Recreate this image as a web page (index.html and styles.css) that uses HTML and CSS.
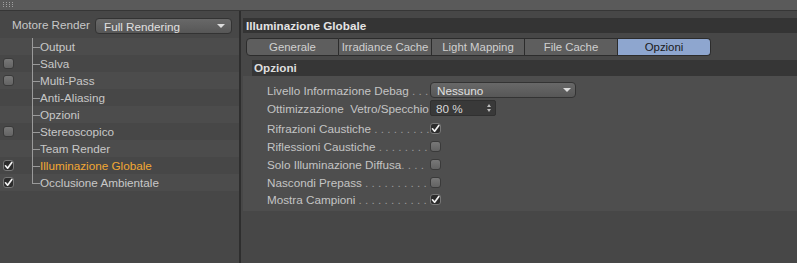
FILE: index.html
```html
<!DOCTYPE html>
<html lang="it">
<head>
    <meta charset="UTF-8">
    <meta name="viewport" content="width=device-width, initial-scale=1.0">
    <title>Impostazioni Render</title>
    <link rel="stylesheet" href="styles.css">
</head>
<body>
    <div class="topbar"><span class="grip"></span></div>

    <div class="main">
        <!-- Left: render settings tree -->
        <div class="side">
            <div class="render-row">
                <span class="render-label">Motore Render</span>
                <div class="select render-select">Full Rendering<span class="arrow"></span></div>
            </div>
            <ul class="tree">
                <li class="row odd"><span class="box none"></span><span class="twig"></span>Output</li>
                <li class="row"><span class="box"></span><span class="twig"></span>Salva</li>
                <li class="row odd"><span class="box"></span><span class="twig"></span>Multi-Pass</li>
                <li class="row"><span class="box none"></span><span class="twig"></span>Anti-Aliasing</li>
                <li class="row odd"><span class="box none"></span><span class="twig"></span>Opzioni</li>
                <li class="row"><span class="box"></span><span class="twig"></span>Stereoscopico</li>
                <li class="row odd"><span class="box none"></span><span class="twig"></span>Team Render</li>
                <li class="row active"><span class="box checked"><svg viewBox="0 0 11 11"><path d="M2.5 5.8 L4.6 8.2 L8.8 2.4"/></svg></span><span class="twig"></span>Illuminazione Globale</li>
                <li class="row odd"><span class="box checked"><svg viewBox="0 0 11 11"><path d="M2.5 5.8 L4.6 8.2 L8.8 2.4"/></svg></span><span class="twig last"></span>Occlusione Ambientale</li>
            </ul>
        </div>

        <div class="divider"></div>

        <!-- Right: Illuminazione Globale settings -->
        <div class="content">
            <div class="panel-title">Illuminazione Globale</div>
            <div class="tabs">
                <div class="tab first">Generale</div>
                <div class="tab">Irradiance Cache</div>
                <div class="tab">Light Mapping</div>
                <div class="tab">File Cache</div>
                <div class="tab selected">Opzioni</div>
            </div>
            <div class="group-title">Opzioni</div>
            <div class="group">
                <div class="field tall">
                    <span class="label">Livello Informazione Debag<span class="dots"> . . .</span></span>
                    <div class="select debug-select">Nessuno<span class="arrow"></span></div>
                </div>
                <div class="field tall">
                    <span class="label">Ottimizzazione&nbsp; Vetro/Specchio</span>
                    <div class="number">80 %<span class="spin"></span></div>
                </div>
                <div class="field first-check">
                    <span class="label">Rifrazioni Caustiche <span class="dots">. . . . . . . . .</span></span>
                    <span class="box checked"><svg viewBox="0 0 11 11"><path d="M2.5 5.8 L4.6 8.2 L8.8 2.4"/></svg></span>
                </div>
                <div class="field">
                    <span class="label">Riflessioni Caustiche <span class="dots">. . . . . . . .</span></span>
                    <span class="box"></span>
                </div>
                <div class="field">
                    <span class="label">Solo Illuminazione Diffusa<span class="dots">. . . .</span></span>
                    <span class="box"></span>
                </div>
                <div class="field">
                    <span class="label">Nascondi Prepass <span class="dots">. . . . . . . . . . .</span></span>
                    <span class="box"></span>
                </div>
                <div class="field">
                    <span class="label">Mostra Campioni <span class="dots">. . . . . . . . . . .</span></span>
                    <span class="box checked"><svg viewBox="0 0 11 11"><path d="M2.5 5.8 L4.6 8.2 L8.8 2.4"/></svg></span>
                </div>
            </div>
        </div>
    </div>
</body>
</html>
```

FILE: styles.css
```css
body {
    margin: 0;
    width: 797px;
    height: 263px;
    overflow: hidden;
    background: #474747;
    color: #c4c4c4;
    font-family: "Liberation Sans", Arial, sans-serif;
    font-size: 11.7px;
}
.topbar {
    height: 10px;
    background: #5a5a5a;
    border-bottom: 1px solid #363636;
    position: relative;
}
.grip {
    position: absolute;
    left: 3px;
    top: 2px;
    width: 12px;
    height: 6px;
    background:
        linear-gradient(90deg, #a0a0a0 1px, transparent 1px) 0 0 / 3px 2px,
        #5a5a5a;
    -webkit-mask: linear-gradient(#000 1px, transparent 1px) 0 0 / 3px 2px;
    mask: linear-gradient(#000 1px, transparent 1px) 0 0 / 3px 2px;
}
.main {
    display: flex;
    height: 252px;
}
.side {
    width: 239px;
}
.divider {
    width: 2px;
    background: #2e2e2e;
}
.content {
    flex: 1;
}

/* left panel */
.render-row {
    display: flex;
    align-items: center;
    height: 27px;
    padding-left: 12px;
}
.render-label {
    width: 83px;
    color: #c8c8c8;
}
.select {
    position: relative;
    height: 16px;
    line-height: 15px;
    box-sizing: border-box;
    padding-left: 8px;
    border: 1px solid #333;
    border-radius: 4px;
    background: linear-gradient(#686868, #575757);
    color: #e0e0e0;
}
.render-select {
    width: 137px;
    margin-top: 2px;
}
.arrow {
    position: absolute;
    right: 6px;
    top: 5px;
    border-left: 4px solid transparent;
    border-right: 4px solid transparent;
    border-top: 4px solid #dcdcdc;
}
.tree {
    list-style: none;
    margin: 0;
    padding: 0;
}
.row {
    display: flex;
    align-items: center;
    height: 17px;
    color: #c8c8c8;
}
.row.odd {
    background: #4c4c4c;
}
.row.active {
    color: #f2a733;
}
.tree .box {
    margin: 0 18px 0 3px;
}
.box {
    width: 11px;
    height: 11px;
    box-sizing: border-box;
    border: 1px solid #3a3a3a;
    border-radius: 3px;
    background: linear-gradient(#787878, #636363);
}
.box.none {
    visibility: hidden;
}
.box.checked {
    background: #2c2c2c;
    border-color: #777;
}
.box svg {
    display: block;
    width: 11px;
    height: 11px;
    margin: -1px 0 0 -1px;
}
.box path {
    fill: none;
    stroke: #f2f2f2;
    stroke-width: 1.7;
    stroke-linecap: round;
    stroke-linejoin: round;
}
.twig {
    width: 8px;
    height: 17px;
    background:
        linear-gradient(#9a9a9a, #9a9a9a) no-repeat 0 0 / 1px 100%,
        linear-gradient(#9a9a9a, #9a9a9a) no-repeat 0 9px / 100% 1px;
}
.twig.last {
    background:
        linear-gradient(#9a9a9a, #9a9a9a) no-repeat 0 0 / 1px 10px,
        linear-gradient(#9a9a9a, #9a9a9a) no-repeat 0 9px / 100% 1px;
}

/* right panel */
.panel-title {
    margin: 7px 0 0 2px;
    height: 15px;
    line-height: 15px;
    padding-left: 3px;
    background: #343434;
    color: #e4e4e4;
    font-weight: bold;
}
.tabs {
    display: flex;
    margin: 5px 0 0 5px;
    width: 465px;
    height: 18px;
}
.tab {
    width: 93px;
    box-sizing: border-box;
    border: 1px solid #2c2c2c;
    border-left: none;
    background: #5e5e5e;
    color: #d0d0d0;
    text-align: center;
    line-height: 16px;
    font-size: 11.4px;
    white-space: nowrap;
}
.tab.first {
    border-left: 1px solid #2c2c2c;
    border-radius: 4px 0 0 4px;
}
.tab.selected {
    background: #8ea6cf;
    color: #1a1a1a;
    border-radius: 0 4px 4px 0;
}
.group-title {
    margin: 4px 0 0 11px;
    height: 16px;
    line-height: 16px;
    padding-left: 2px;
    background: #363636;
    color: #dedede;
    font-weight: bold;
}
.group {
    margin-left: 2px;
    height: 135px;
    padding: 5px 0 0 24px;
    box-sizing: border-box;
    background: #4e4e4e;
}
.field {
    display: flex;
    align-items: center;
    height: 17.75px;
}
.field.tall {
    height: 18px;
}
.field.first-check {
    margin-top: 3px;
}
.label {
    width: 163px;
    white-space: nowrap;
    color: #c4c4c4;
}
.dots {
    color: #9a9a9a;
}
.debug-select {
    width: 146px;
    padding-left: 6px;
}
.debug-select .arrow {
    right: 4px;
}
.number {
    position: relative;
    width: 66px;
    height: 16px;
    line-height: 15px;
    box-sizing: border-box;
    padding-left: 5px;
    background: #393939;
    border: 1px solid #303030;
    border-radius: 2px;
    color: #d8d8d8;
}
.spin::before,
.spin::after {
    content: "";
    position: absolute;
    right: 4px;
    border-left: 2.5px solid transparent;
    border-right: 2.5px solid transparent;
}
.spin::before {
    top: 3px;
    border-bottom: 3px solid #bdbdbd;
}
.spin::after {
    top: 8px;
    border-top: 3px solid #bdbdbd;
}
```
